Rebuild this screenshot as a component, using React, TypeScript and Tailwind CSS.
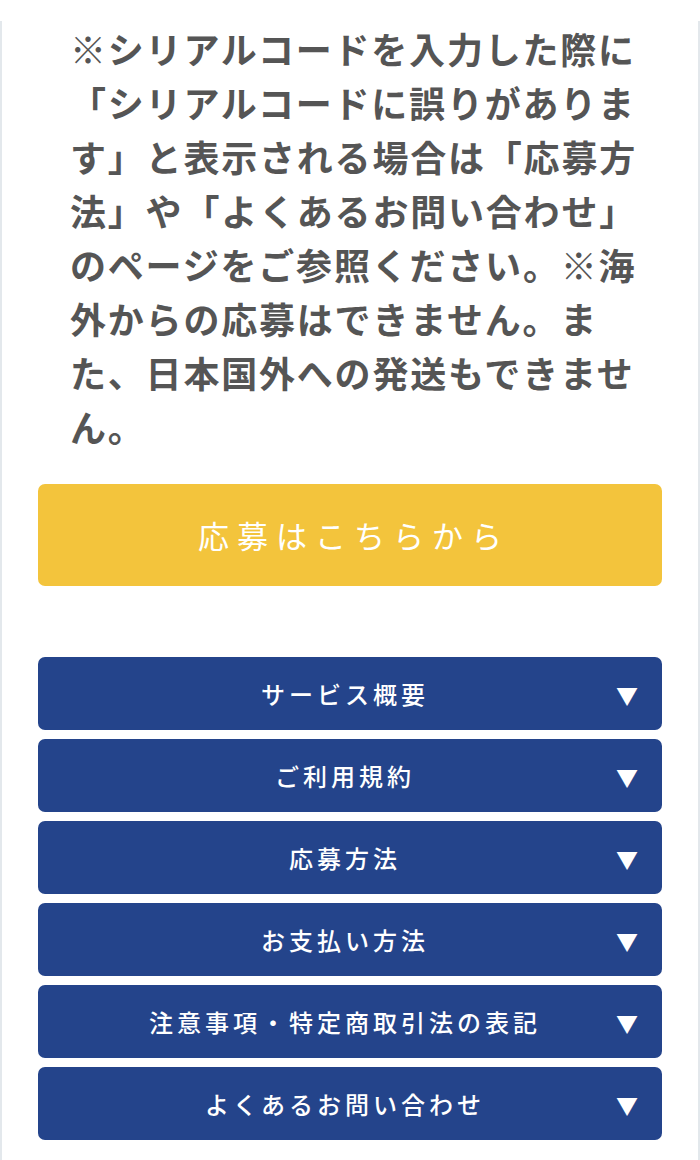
const menuItems = [
  'サービス概要',
  'ご利用規約',
  '応募方法',
  'お支払い方法',
  '注意事項・特定商取引法の表記',
  'よくあるお問い合わせ',
];

function MenuButton({ label }: { label: string }) {
  return (
    <button
      type="button"
      className="relative flex h-[73px] w-full items-center justify-center rounded-[7px] bg-[#24448b] pr-[10px] text-white"
    >
      <span className="text-[24px] font-medium tracking-[4px]">{label}</span>
      <span className="absolute right-[24px] top-1/2 -translate-y-1/2 text-[22px] leading-none">▼</span>
    </button>
  );
}

export default function App() {
  return (
    <div
      className="min-h-[1160px] bg-white pt-[21px]"
      style={{ fontFamily: '"Noto Sans CJK JP", "Noto Sans", sans-serif' }}
    >
      <div className="min-h-[1139px] border-x-2 border-[#e3e8ec] px-[36px]">
        <p className="pl-[32px] pr-[18px] text-[36px] font-bold leading-[54px] tracking-[1.8px] text-[#555555]">
          ※シリアルコードを入力した際に「シリアルコードに誤りがあります」と表示される場合は「応募方法」や「よくあるお問い合わせ」のページをご参照ください。※海外からの応募はできません。また、日本国外への発送もできません。
        </p>

        <button
          type="button"
          className="mt-[31px] flex h-[102px] w-full items-center justify-center rounded-[7px] bg-[#f3c43c] text-white"
        >
          <span className="pl-[8px] text-[31px] font-normal tracking-[8px]">応募はこちらから</span>
        </button>

        <div className="mt-[71px] flex flex-col gap-[9px]">
          {menuItems.map((item) => (
            <MenuButton key={item} label={item} />
          ))}
        </div>
      </div>
    </div>
  );
}
